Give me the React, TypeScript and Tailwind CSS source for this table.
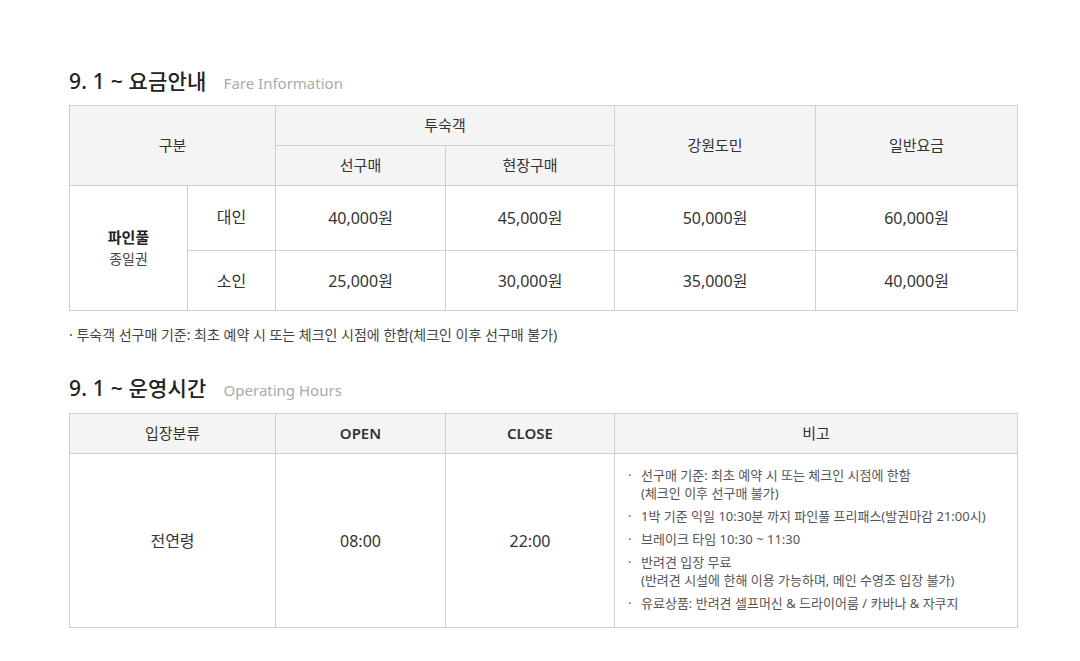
const font = { fontFamily: '"Noto Sans", "Noto Sans CJK KR", sans-serif' };

const th = "border border-[#cfcfcf] bg-[#f4f4f4] text-[15px] font-normal text-[#333] text-center align-middle";
const td = "border border-[#cfcfcf] text-[16px] text-[#333] text-center align-middle";

function SectionTitle({ title, sub }: { title: string; sub: string }) {
  return (
    <h3 className="flex items-baseline gap-[17px]">
      <span className="text-[21px] font-medium text-[#222] leading-none tracking-[0.2px]">{title}</span>
      <span className="text-[15px] text-[#aaa] leading-none">{sub}</span>
    </h3>
  );
}

const remarks: string[][] = [
  ["선구매 기준: 최초 예약 시 또는 체크인 시점에 한함", "(체크인 이후 선구매 불가)"],
  ["1박 기준 익일 10:30분 까지 파인풀 프리패스(발권마감 21:00시)"],
  ["브레이크 타임 10:30 ~ 11:30"],
  ["반려견 입장 무료", "(반려견 시설에 한해 이용 가능하며, 메인 수영조 입장 불가)"],
  ["유료상품: 반려견 셀프머신 & 드라이어룸 / 카바나 & 자쿠지"],
];

export default function App() {
  return (
    <div className="min-h-[661px] bg-white pl-[69px] pt-[71px]" style={font}>
      <div className="w-[948px]">
        <SectionTitle title="9. 1 ~ 요금안내" sub="Fare Information" />
        <table className="mt-[13px] w-full table-fixed border-collapse">
          <colgroup>
            <col className="w-[118px]" />
            <col className="w-[88px]" />
            <col className="w-[170px]" />
            <col className="w-[169px]" />
            <col className="w-[201px]" />
            <col className="w-[202px]" />
          </colgroup>
          <thead>
            <tr className="h-[40px]">
              <th colSpan={2} rowSpan={2} className={th}>구분</th>
              <th colSpan={2} className={th}>투숙객</th>
              <th rowSpan={2} className={th}>강원도민</th>
              <th rowSpan={2} className={th}>일반요금</th>
            </tr>
            <tr className="h-[40px]">
              <th className={th}>선구매</th>
              <th className={th}>현장구매</th>
            </tr>
          </thead>
          <tbody>
            <tr className="h-[65px]">
              <td rowSpan={2} className={td}>
                <div className="flex flex-col items-center leading-[22px]">
                  <span className="text-[15px] font-bold text-[#222]">파인풀</span>
                  <span className="text-[14px] text-[#444]">종일권</span>
                </div>
              </td>
              <td className={td + " pb-[3px]"}>대인</td>
              <td className={td}>40,000원</td>
              <td className={td}>45,000원</td>
              <td className={td}>50,000원</td>
              <td className={td}>60,000원</td>
            </tr>
            <tr className="h-[60px]">
              <td className={td}>소인</td>
              <td className={td}>25,000원</td>
              <td className={td}>30,000원</td>
              <td className={td}>35,000원</td>
              <td className={td}>40,000원</td>
            </tr>
          </tbody>
        </table>
        <p className="mt-[14px] text-[14px] text-[#444] leading-[20px]">· 투숙객 선구매 기준: 최초 예약 시 또는 체크인 시점에 한함(체크인 이후 선구매 불가)</p>

        <div className="mt-[33px]">
          <SectionTitle title="9. 1 ~ 운영시간" sub="Operating Hours" />
        </div>
        <table className="mt-[14px] w-full table-fixed border-collapse">
          <colgroup>
            <col className="w-[206px]" />
            <col className="w-[170px]" />
            <col className="w-[169px]" />
            <col className="w-[403px]" />
          </colgroup>
          <thead>
            <tr className="h-[40px]">
              <th className={th}>입장분류</th>
              <th className={th + " font-semibold"}>OPEN</th>
              <th className={th + " font-semibold"}>CLOSE</th>
              <th className={th}>비고</th>
            </tr>
          </thead>
          <tbody>
            <tr className="h-[174px]">
              <td className={td + " text-[15px]"}>전연령</td>
              <td className={td}>08:00</td>
              <td className={td}>22:00</td>
              <td className="border border-[#cfcfcf] align-top pl-[13px] pt-[12px] pb-[10px]">
                <ul className="flex flex-col gap-[5px] text-[13px] text-[#555] leading-[18px]">
                  {remarks.map((lines, i) => (
                    <li key={i} className="flex">
                      <span className="w-[13px] shrink-0">·</span>
                      <span className="flex flex-col">
                        {lines.map((l, j) => (
                          <span key={j}>{l}</span>
                        ))}
                      </span>
                    </li>
                  ))}
                </ul>
              </td>
            </tr>
          </tbody>
        </table>
      </div>
    </div>
  );
}
